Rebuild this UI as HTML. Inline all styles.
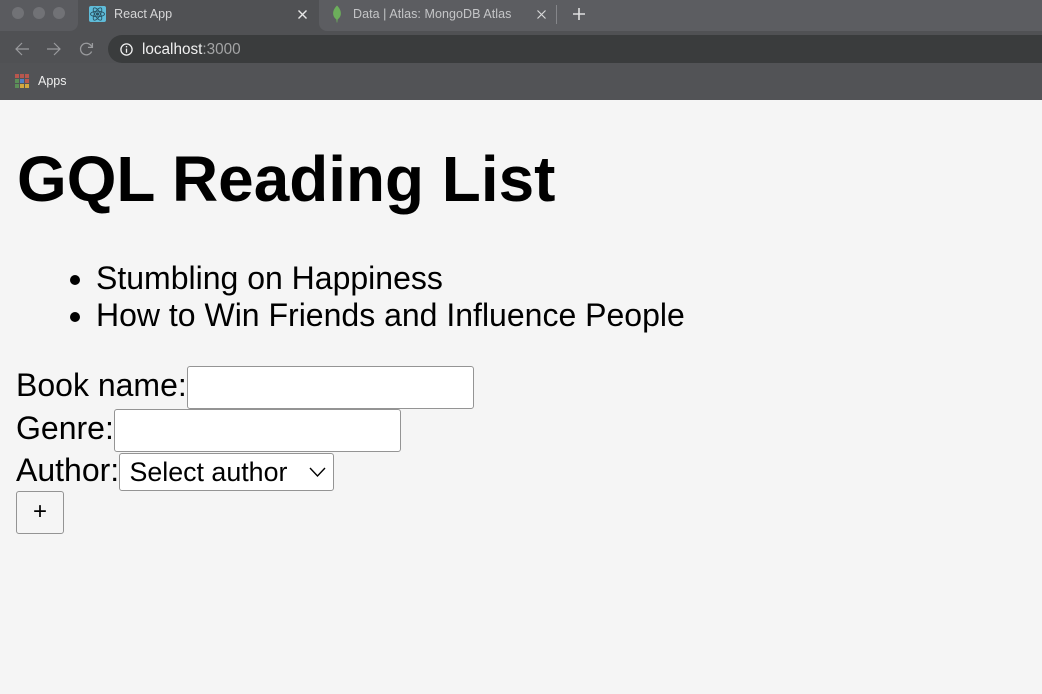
<!DOCTYPE html>
<html><head><meta charset="utf-8"><style>
html,body{margin:0;padding:0;width:1042px;height:694px;overflow:hidden;background:#f5f5f5;font-family:"Liberation Sans",sans-serif;color:#000}
.a{position:absolute;white-space:nowrap;line-height:1}
.box{position:absolute;box-sizing:border-box;background:#fff;border:1px solid #949494;border-radius:3px}
svg{position:absolute;overflow:visible}
#chrome{position:absolute;left:0;top:0;width:1042px;height:100px;overflow:hidden;background:#505154;filter:blur(.35px)}
</style></head><body>
<div id="chrome">
<div style="position:absolute;left:0;top:0;width:78px;height:31px;background:#5a5b5f;border-radius:0 0 8px 0"></div>
<div style="position:absolute;left:319px;top:0;width:723px;height:31px;background:#5c5d61;border-radius:0 0 0 8px"></div>
<div style="position:absolute;left:108px;top:35px;width:934px;height:28px;background:#3a3c3d;border-radius:14px 0 0 14px"></div>
<div style="position:absolute;left:0;top:63px;width:1042px;height:37px;background:#525356"></div>
<div style="position:absolute;left:12px;top:7px;width:12px;height:12px;border-radius:50%;background:#717276"></div>
<div style="position:absolute;left:33px;top:7px;width:12px;height:12px;border-radius:50%;background:#717276"></div>
<div style="position:absolute;left:53px;top:7px;width:12px;height:12px;border-radius:50%;background:#717276"></div>

<div style="position:absolute;left:89px;top:6px;width:17px;height:16px;border-radius:2px;background:#5fbcd9"></div>
<svg style="left:89px;top:6px" width="17" height="16" viewBox="0 0 17 16" fill="none" stroke="#2b5566" stroke-width=".9"><ellipse cx="8.5" cy="8" rx="7" ry="2.8"/><ellipse cx="8.5" cy="8" rx="7" ry="2.8" transform="rotate(60 8.5 8)"/><ellipse cx="8.5" cy="8" rx="7" ry="2.8" transform="rotate(120 8.5 8)"/><circle cx="8.5" cy="8" r="1.2" fill="#2b5566"/></svg>
<div class="a" style="left:114px;top:8px;font-size:12.6px;color:#d6d6d7">React App</div>
<svg style="left:298px;top:10px" width="9" height="9" fill="none" stroke="#e8e8e8" stroke-width="1.4"><path d="M.5 .5L8.5 8.5M8.5 .5L.5 8.5"/></svg>

<svg style="left:332px;top:5px" width="10" height="18" viewBox="0 0 10 18"><path d="M5 0.5C8 3.5 9.2 6.5 8.8 9.5C8.4 12 6.8 13.5 5.6 14.5L5.3 17.5H4.7L4.4 14.5C3.2 13.5 1.6 12 1.2 9.5C0.8 6.5 2 3.5 5 0.5Z" fill="#6cae5b"/></svg>
<div class="a" style="left:353px;top:8px;font-size:12.5px;letter-spacing:.06px;color:#c4c5c7">Data | Atlas: MongoDB Atlas</div>
<svg style="left:537px;top:10px" width="9" height="9" fill="none" stroke="#d8d8d9" stroke-width="1.2"><path d="M.5 .5L8.5 8.5M8.5 .5L.5 8.5"/></svg>
<div style="position:absolute;left:556px;top:5px;width:1px;height:19px;background:#85868a"></div>
<svg style="left:573px;top:8px" width="12" height="12" fill="none" stroke="#dfdfe0" stroke-width="1.6"><path d="M6 0V12M0 6H12"/></svg>

<svg style="left:15px;top:42px" width="14" height="14" viewBox="0 0 14 14" fill="none" stroke="#9a9b9e" stroke-width="1.2"><path d="M14 7H1M7 1L1 7L7 13"/></svg>
<svg style="left:47px;top:42px" width="14" height="14" viewBox="0 0 14 14" fill="none" stroke="#9a9b9e" stroke-width="1.2"><path d="M0 7H13M7 1L13 7L7 13"/></svg>
<svg style="left:79px;top:42px" width="15" height="15" viewBox="0 0 15 15" fill="none" stroke="#9a9b9e" stroke-width="1.3"><path d="M12.6 9.5A5.8 5.8 0 1 1 11.5 3L13 4.5"/><path d="M13.4 1V5.4H9"/></svg>
<svg style="left:120px;top:43px" width="13" height="13" viewBox="0 0 13 13" fill="none" stroke="#f2f2f2" stroke-width="1.3"><circle cx="6.5" cy="6.5" r="5.6"/><path d="M6.5 5.6V9.8M6.5 3V4.4"/></svg>
<div class="a" style="left:142px;top:42px;font-size:15.3px;color:#f0f0f0">localhost<span style="color:#a3a4a5">:3000</span></div>

<div style="position:absolute;left:15px;top:74px;display:grid;grid-template-columns:repeat(3,4px);grid-auto-rows:4px;gap:1px">
<i style="background:#b8574e"></i><i style="background:#b8574e"></i><i style="background:#b8574e"></i>
<i style="background:#5c8f58"></i><i style="background:#4f7fc4"></i><i style="background:#b8574e"></i>
<i style="background:#5c8f58"></i><i style="background:#d3a73f"></i><i style="background:#d3a73f"></i>
</div>
<div class="a" style="left:38px;top:75px;font-size:12.5px;color:#efefef">Apps</div>
</div>

<div class="a" style="left:17px;top:148px;font-size:63.9px;font-weight:bold">GQL Reading List</div>
<div style="position:absolute;left:70px;top:275px;width:10px;height:10px;border-radius:50%;background:#000"></div>
<div style="position:absolute;left:70px;top:312px;width:10px;height:10px;border-radius:50%;background:#000"></div>
<div class="a" style="left:96px;top:262px;font-size:32px">Stumbling on Happiness</div>
<div class="a" style="left:96px;top:299px;font-size:32px">How to Win Friends and Influence People</div>

<div class="a" style="left:16px;top:369px;font-size:32px">Book name:</div>
<div class="box" style="left:187px;top:366px;width:287px;height:43px"></div>
<div class="a" style="left:16px;top:412px;font-size:32px">Genre:</div>
<div class="box" style="left:114px;top:409px;width:287px;height:43px"></div>
<div class="a" style="left:16px;top:454px;font-size:32px">Author:</div>
<div class="box" style="left:119px;top:453px;width:215px;height:38px"></div>
<div class="a" style="left:129.5px;top:459px;font-size:26.8px">Select author</div>
<svg style="left:309px;top:467px" width="17" height="10" fill="none" stroke="#000" stroke-width="1.4"><path d="M1 1L8.5 9L16 1"/></svg>
<div class="box" style="left:16px;top:491px;width:48px;height:43px;background:#f5f5f5"></div>
<div class="a" style="left:33px;top:500px;font-size:24px">+</div>
</body></html>
